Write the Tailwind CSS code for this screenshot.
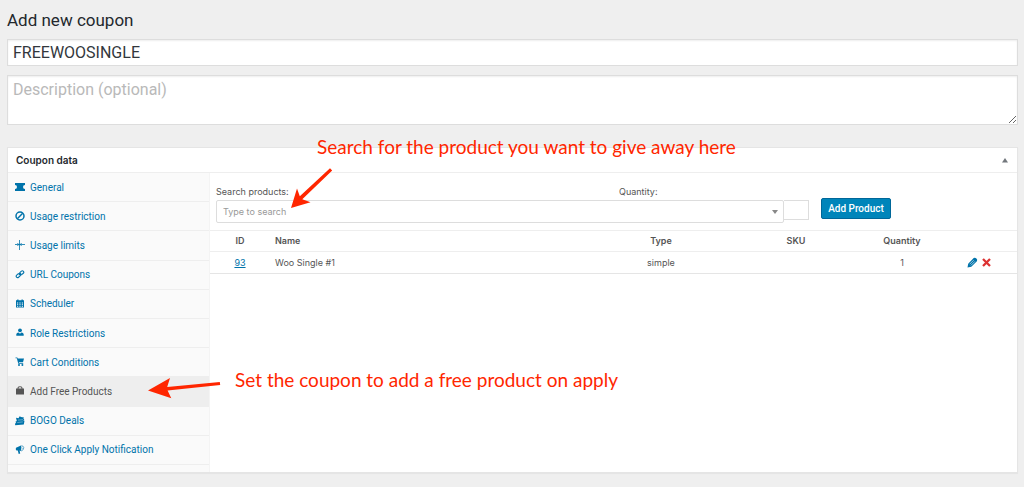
<!DOCTYPE html>
<html lang="en">
<head>
    <meta charset="UTF-8">
    <meta name="viewport" content="width=device-width, initial-scale=1.0">
    <title>Add new coupon</title>
    <script src="https://cdn.jsdelivr.net/npm/@tailwindcss/browser@4"></script>
</head>
<body class="bg-[#efefef] min-h-screen font-['Inter',sans-serif] text-[#555]">
    <main class="pl-[7px] pr-[6px] pt-2 pb-3">
        <h1 class="text-[17px] leading-6 font-['Roboto',sans-serif] text-[#23282d]">Add new coupon</h1>

        <!-- Coupon code and description -->
        <form>
            <input type="text" aria-label="Coupon code" value="FREEWOOSINGLE" class="block mt-[7px] w-full h-[27px] px-[5px] bg-white border border-[#ddd] shadow-[inset_0_1px_2px_rgba(0,0,0,0.07)] text-[16px] font-['Roboto',sans-serif] text-[#32373c] outline-none">
            <textarea aria-label="Description" placeholder="Description (optional)" class="block mt-[9px] w-full h-[50px] px-[5px] py-0.5 bg-white border border-[#ddd] shadow-[inset_0_1px_2px_rgba(0,0,0,0.07)] text-[16px] leading-6 font-['Roboto',sans-serif] placeholder:text-[#b9b9b9] outline-none"></textarea>
        </form>

        <!-- Coupon data box -->
        <section class="relative mt-[22px] bg-white border border-[#e5e5e5] shadow-[0_1px_1px_rgba(0,0,0,0.04)]">
            <header class="flex items-center justify-between h-[25px] pl-2 pr-[9px] border-b border-[#eee]">
                <h2 class="text-[10px] font-semibold text-[#23282d]">Coupon data</h2>
                <button type="button" aria-label="Toggle panel">
                    <svg class="w-[6px] h-[5px]" viewBox="0 0 6 5" fill="#72777c"><path d="M3 0L6 4.500H0z"/></svg>
                </button>
            </header>

            <div class="flex min-h-[299px]">
                <!-- Tabs -->
                <nav class="w-[202px] shrink-0 bg-[#fafafa] border-r border-[#f4f4f4] font-['Roboto',sans-serif] text-[10px] text-[#0073aa]">
                    <ul class="grid auto-rows-fr h-[292px]">
                        <li class="border-b border-[#eee]"><a href="#" class="flex items-center h-full pl-[7px] gap-[5px]">
                            <svg class="w-[10px] h-[10px]" viewBox="0 0 10 10" fill="currentColor"><path d="M0 1h10v2a2 2 0 0 0 0 4v2H0V7a2 2 0 0 0 0-4z"/></svg>
                            General</a></li>
                        <li class="border-b border-[#eee]"><a href="#" class="flex items-center h-full pl-[7px] gap-[5px]">
                            <svg class="w-[10px] h-[10px]" viewBox="0 0 10 10" fill="none" stroke="currentColor" stroke-width="1.500"><circle cx="5" cy="5" r="4"/><path d="M2.300 7.700l5.400-5.400"/></svg>
                            Usage restriction</a></li>
                        <li class="border-b border-[#eee]"><a href="#" class="flex items-center h-full pl-[7px] gap-[5px]">
                            <svg class="w-[10px] h-[10px]" viewBox="0 0 10 10" fill="none" stroke="currentColor" stroke-width="0.800"><path d="M4.500 0v10M0 4.500h10M2.500 3L3.500 4.500 2.500 6M6.500 3L5.500 4.500l1 1.500"/></svg>
                            Usage limits</a></li>
                        <li class="border-b border-[#eee]"><a href="#" class="flex items-center h-full pl-[7px] gap-[5px]">
                            <svg class="w-[10px] h-[10px]" viewBox="0 0 10 10" fill="none" stroke="currentColor" stroke-width="1.100"><rect x="4.400" y="1.400" width="4.600" height="2.800" rx="1.400" transform="rotate(-42 6.700 2.800)"/><rect x="1" y="4.200" width="4.600" height="2.800" rx="1.400" transform="rotate(-42 3.300 5.600)"/><path d="M3.700 5.200l2.400-2.100"/></svg>
                            URL Coupons</a></li>
                        <li class="border-b border-[#eee]"><a href="#" class="flex items-center h-full pl-[7px] gap-[5px]">
                            <svg class="w-[10px] h-[10px]" viewBox="0 0 10 10" fill="currentColor"><path fill-rule="evenodd" d="M1 1.200h1.200V.5h1.300v.7h3V.5h1.300v.7H9V8.500H1zM2 3.500v1h1.200v-1zm2.400 0v1h1.200v-1zm2.400 0v1H8v-1zM2 5.300v.900h1.200v-.900zm2.400 0v.900h1.200v-.900zm2.400 0v.900H8v-.900zM2 7v.700h1.200V7zm2.400 0v.700h1.200V7zm2.400 0v.7H8V7z"/></svg>
                            Scheduler</a></li>
                        <li class="border-b border-[#eee]"><a href="#" class="flex items-center h-full pl-[7px] gap-[5px]">
                            <svg class="w-[10px] h-[10px]" viewBox="0 0 10 10" fill="currentColor"><circle cx="5" cy="2.300" r="1.900"/><path d="M1.300 7.800V6.300Q1.500 4.800 3.600 4.500L5 5.800l1.400-1.300q2.100.300 2.300 1.800V7.800z"/></svg>
                            Role Restrictions</a></li>
                        <li class="border-b border-[#eee]"><a href="#" class="flex items-center h-full pl-[7px] gap-[5px]">
                            <svg class="w-[10px] h-[10px]" viewBox="0 0 10 10" fill="currentColor"><path d="M.5.500h1.800l.4 1H9L8 5.200H3.800l.2.800h4.200v.800H3.300L1.800 1.300H.5z"/><circle cx="4" cy="7.900" r="1"/><circle cx="7.400" cy="7.900" r="1"/></svg>
                            Cart Conditions</a></li>
                        <li class="border-b border-[#eee] bg-[#eee]"><a href="#" aria-current="page" class="flex items-center h-full pl-[7px] gap-[5px] text-[#555]">
                            <svg class="w-[10px] h-[10px]" viewBox="0 0 10 10" fill="currentColor"><path fill-rule="evenodd" d="M2.500 2.600C2.500 1 3.200.300 5 .300s2.500.700 2.500 2.300H9V8.600H1V2.600zm1 0h3c0-1-.4-1.400-1.500-1.400s-1.500.4-1.500 1.400z"/></svg>
                            Add Free Products</a></li>
                        <li class="border-b border-[#eee]"><a href="#" class="flex items-center h-full pl-[7px] gap-[5px]">
                            <svg class="w-[10px] h-[10px]" viewBox="0 0 10 10" fill="currentColor"><path d="M1 1.800l2.500.5L4.700.300l1.300.700 3 .600-.7 1 1 .700-1 1.300 1.200.2-.7 3.700-8.500.7-.5-1.700 1.400-.5-.8-1.200 1.400-.8z"/><path d="M3 4.100l5-.4M2.300 6.500l5.500-.6" stroke="#fafafa" stroke-width=".4"/></svg>
                            BOGO Deals</a></li>
                        <li class="border-b border-[#eee]"><a href="#" class="flex items-center h-full pl-[7px] gap-[5px]">
                            <svg class="w-[10px] h-[10px]" viewBox="0 0 10 10" fill="currentColor"><path d="M1 2.700L6 .500v5.600L4.600 5.600l.6 2.900-1.500.4-.9-3.400L1.400 5.500Q.300 4.100 1 2.700z"/><path d="M6 .900q2.500-.5 2.800 1.800Q8.800 5.100 6 6.100M6.500 2.300q1.300.9 0 2" fill="none" stroke="currentColor" stroke-width=".6"/></svg>
                            One Click Apply Notification</a></li>
                    </ul>
                </nav>

                <!-- Free products panel -->
                <div class="flex-1 min-w-0 pt-[13px]">
                    <form class="pl-[6px] text-[9px]">
                        <div class="flex leading-3">
                            <label for="product" class="w-[403px]">Search products:</label>
                            <label for="quantity">Quantity:</label>
                        </div>
                        <div class="flex items-start">
                            <div class="relative flex-1 mt-0.5">
                                <select id="product" class="block appearance-none w-full h-[23px] px-[6px] bg-white border border-[#ddd] rounded-[2px] text-[#999] outline-none">
                                    <option>Type to search</option>
                                </select>
                                <svg class="absolute right-[6px] top-[10px] w-[6px] h-[4px] pointer-events-none" viewBox="0 0 6 4" fill="#888"><path d="M0 0h6L3 4z"/></svg>
                            </div>
                            <input id="quantity" type="text" class="w-[25px] h-5 mt-0.5 px-1 bg-white border border-l-0 border-[#ddd] outline-none">
                            <button type="button" class="ml-3 mr-[126px] w-[70px] h-[21px] bg-[#0085ba] border border-[#006799] rounded-[2px] font-['Roboto',sans-serif] text-[10px] font-medium text-white whitespace-nowrap">Add Product</button>
                        </div>
                    </form>

                    <table class="mt-[7px] w-full table-fixed text-[9px] leading-3 text-center">
                        <colgroup>
                            <col class="w-[60px]">
                            <col>
                            <col class="w-[136px]">
                            <col class="w-[134px]">
                            <col class="w-[78px]">
                            <col class="w-[76px]">
                        </colgroup>
                        <thead>
                            <tr class="h-[21px] border-y border-[#eee]">
                                <th class="font-semibold">ID</th>
                                <th class="pl-[5px] font-semibold text-left">Name</th>
                                <th class="font-semibold">Type</th>
                                <th class="font-semibold">SKU</th>
                                <th class="font-semibold">Quantity</th>
                                <th></th>
                            </tr>
                        </thead>
                        <tbody>
                            <tr class="h-[22px] border-b border-[#e5e5e5]">
                                <td><a href="#" class="text-[#0073aa] underline">93</a></td>
                                <td class="pl-[5px] text-left">Woo Single #1</td>
                                <td>simple</td>
                                <td></td>
                                <td>1</td>
                                <td>
                                    <div class="flex items-center justify-center gap-1">
                                        <button type="button" aria-label="Edit">
                                            <svg class="block w-[11px] h-[11px]" viewBox="0 0 11 11"><path d="M.5 10.500l.7-3.800L6.700 1.100Q8 .200 9.400 1.500T9.900 4.200L4.300 9.700z" fill="#0073aa"/><path d="M2.700 7.200l4-4M3.900 8.400l4-4" stroke="#fff" stroke-width=".6"/></svg>
                                        </button>
                                        <button type="button" aria-label="Remove">
                                            <svg class="block w-[9px] h-[9px]" viewBox="0 0 9 9" stroke="#dc3232" stroke-width="2.300"><path d="M1 1l7 7M8 1L1 8"/></svg>
                                        </button>
                                    </div>
                                </td>
                            </tr>
                        </tbody>
                    </table>
                </div>
            </div>

            <!-- Callouts -->
            <p class="absolute left-[309px] -top-[15px] text-[19px] leading-7 font-['Lato',sans-serif] text-[#ff2600] whitespace-nowrap">Search for the product you want to give away here</p>
            <svg class="absolute left-[282px] top-[20px] w-[44px] h-[42px]" viewBox="290 168 44 42" fill="#ff2600"><path d="M291 208L297 188.500 299.800 196.300 330 168.300 332.200 170.600 302.300 199.300 310.500 202.300z"/></svg>
            <p class="absolute left-[227px] top-[218px] text-[19px] leading-7 font-['Lato',sans-serif] text-[#ff2600] whitespace-nowrap">Set the coupon to add a free product on apply</p>
            <svg class="absolute left-[139px] top-[229px] w-[74px] h-[23px]" viewBox="147 377 74 23" fill="#ff2600"><path d="M148 390.400L170 378 167.200 387 219.800 382 220.200 385 167.600 390.600 171.300 398.300z"/></svg>
        </section>
    </main>
</body>
</html>
